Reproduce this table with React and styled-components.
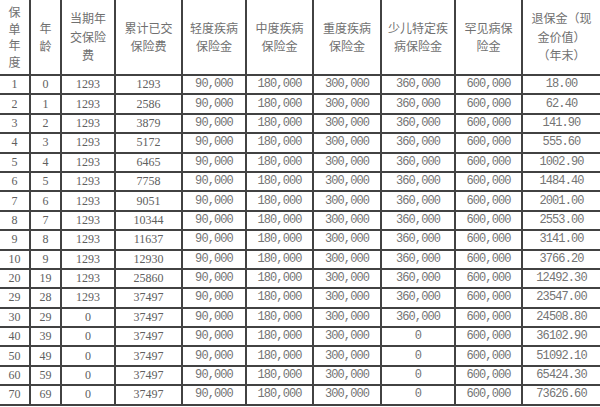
import React from "react";
import styled, { createGlobalStyle } from "styled-components";

const Global = createGlobalStyle`
  html, body { margin: 0; padding: 0; background: #fff; }
  body { width: 600px; height: 407px; overflow: hidden; }
`;

const Table = styled.table`
  width: 600px;
  border-collapse: collapse;
  table-layout: fixed;
  color: #666;
  font-family: "Noto Sans CJK SC", "Liberation Serif", serif;
  font-size: 12px;
`;

const HeadCell = styled.th`
  font-weight: 400;
  height: 74px;
  padding: 0;
  text-align: center;
  vertical-align: middle;
  color: #707070;
  line-height: ${(p) => (p.$tight ? "16.5px" : "18.5px")};
  border: 2px solid #424242;
  border-top: none;
  &:first-child { border-left: none; }
  &:last-child { border-right: none; }
`;

const Row = styled.tr`
  height: 19.4px;
`;

const Cell = styled.td`
  padding: 0;
  text-align: center;
  vertical-align: middle;
  line-height: 17px;
  font-family: ${(p) =>
    p.$mono ? '"Liberation Mono", monospace' : '"Liberation Serif", serif'};
  letter-spacing: ${(p) => (p.$mono ? "-0.9px" : "0")};
  color: ${(p) => (p.$mono ? "#747474" : "#606060")};
  font-size: 12px;
  border: 2px solid #424242;
  &:first-child { border-left: none; }
  &:last-child { border-right: none; }
`;

const widths = [30, 31, 54, 67, 64, 67, 68, 74, 67, 78];

const heads = [
  ["保", "单", "年", "度"],
  ["年", "龄"],
  ["当期年", "交保险", "费"],
  ["累计已交", "保险费"],
  ["轻度疾病", "保险金"],
  ["中度疾病", "保险金"],
  ["重度疾病", "保险金"],
  ["少儿特定疾", "病保险金"],
  ["罕见病保", "险金"],
  ["退保金（现", "金价值）", "（年末）"],
];

const rows = [
  [1, 0, 1293, 1293, "360,000", "18.00"],
  [2, 1, 1293, 2586, "360,000", "62.40"],
  [3, 2, 1293, 3879, "360,000", "141.90"],
  [4, 3, 1293, 5172, "360,000", "555.60"],
  [5, 4, 1293, 6465, "360,000", "1002.90"],
  [6, 5, 1293, 7758, "360,000", "1484.40"],
  [7, 6, 1293, 9051, "360,000", "2001.00"],
  [8, 7, 1293, 10344, "360,000", "2553.00"],
  [9, 8, 1293, 11637, "360,000", "3141.00"],
  [10, 9, 1293, 12930, "360,000", "3766.20"],
  [20, 19, 1293, 25860, "360,000", "12492.30"],
  [29, 28, 1293, 37497, "360,000", "23547.00"],
  [30, 29, 0, 37497, "360,000", "24508.80"],
  [40, 39, 0, 37497, "0", "36102.90"],
  [50, 49, 0, 37497, "0", "51092.10"],
  [60, 59, 0, 37497, "0", "65424.30"],
  [70, 69, 0, 37497, "0", "73626.60"],
];

export default function App() {
  return (
    <>
      <Global />
      <Table>
        <colgroup>
          {widths.map((w, i) => (
            <col key={i} style={{ width: w }} />
          ))}
        </colgroup>
        <thead>
          <tr>
            {heads.map((h, i) => (
              <HeadCell key={i} $tight={i === 0}>
                {h.map((line, j) => (
                  <React.Fragment key={j}>
                    {line}
                    {j < h.length - 1 && <br />}
                  </React.Fragment>
                ))}
              </HeadCell>
            ))}
          </tr>
        </thead>
        <tbody>
          {rows.map((r) => (
            <Row key={r[0]}>
              <Cell>{r[0]}</Cell>
              <Cell>{r[1]}</Cell>
              <Cell>{r[2]}</Cell>
              <Cell>{r[3]}</Cell>
              <Cell $mono>90,000</Cell>
              <Cell $mono>180,000</Cell>
              <Cell $mono>300,000</Cell>
              <Cell $mono>{r[4]}</Cell>
              <Cell $mono>600,000</Cell>
              <Cell $mono>{r[5]}</Cell>
            </Row>
          ))}
        </tbody>
      </Table>
    </>
  );
}
